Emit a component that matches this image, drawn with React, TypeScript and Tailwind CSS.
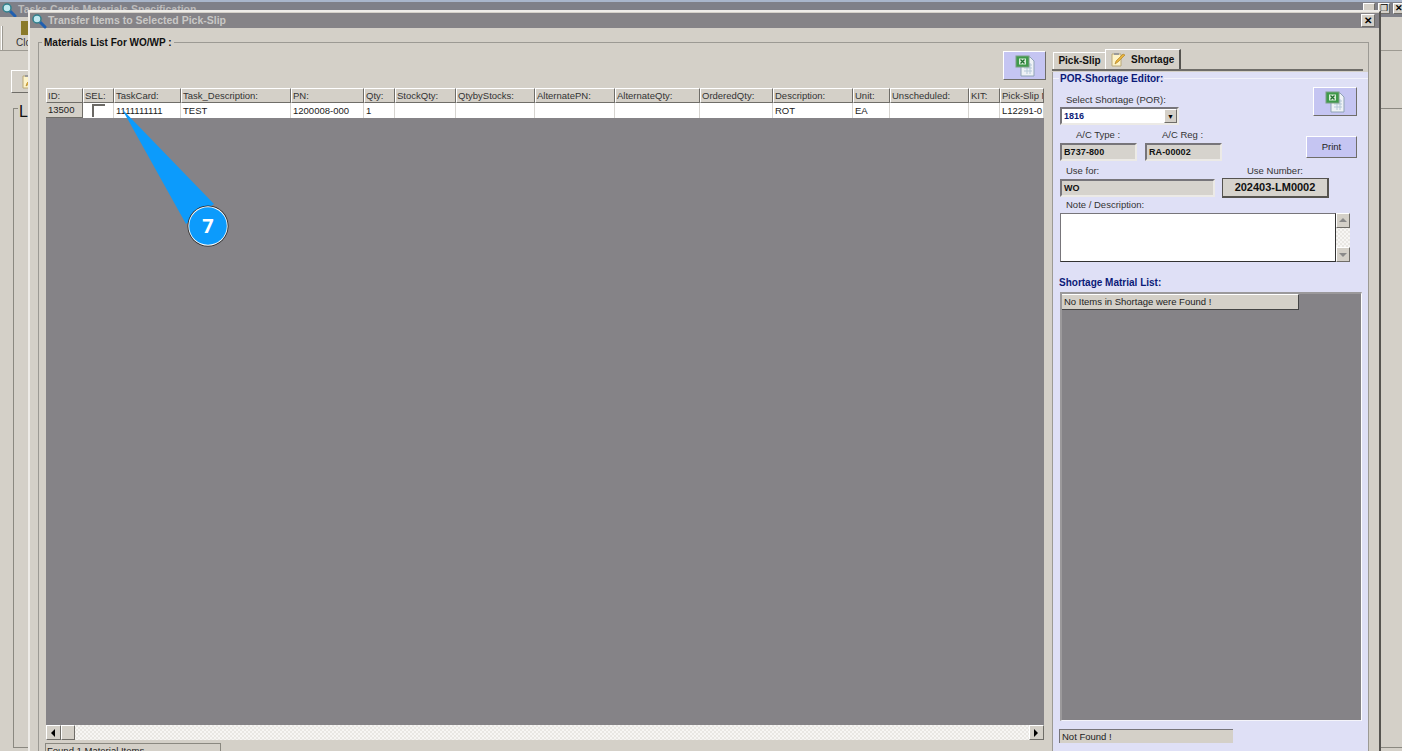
import React from "react";

const raised = "border border-t-white border-l-white border-r-[#6f6d68] border-b-[#6f6d68]";
const sunken = "border-2 border-t-[#77757a] border-l-[#77757a] border-r-[#eceae6] border-b-[#eceae6]";

const cols: [string, string, number][] = [
  ["ID:", "13500", 37],
  ["SEL:", "", 31],
  ["TaskCard:", "1111111111", 67],
  ["Task_Description:", "TEST", 110],
  ["PN:", "1200008-000", 73],
  ["Qty:", "1", 31],
  ["StockQty:", "", 61],
  ["QtybyStocks:", "", 79],
  ["AlternatePN:", "", 80],
  ["AlternateQty:", "", 85],
  ["OrderedQty:", "", 73],
  ["Description:", "ROT", 80],
  ["Unit:", "EA", 37],
  ["Unscheduled:", "", 79],
  ["KIT:", "", 31],
  ["Pick-Slip No:", "L12291-0", 44],
];

function ExcelIcon() {
  return (
    <svg width="24" height="24" viewBox="0 0 24 24">
      <path d="M8 3h9l4 4v15H8z" fill="#eef2f6" stroke="#8fa3b5" />
      <path d="M11 11h8M11 14h8M11 17h8M14 9v11M17 9v11" stroke="#b5c8d8" strokeWidth="1" />
      <rect x="3" y="2" width="13" height="11" fill="#3f9a4a" stroke="#7d9f85" />
      <rect x="6" y="4.5" width="7" height="6" fill="#d8ecd8" />
      <path d="M7.5 5.5l4 4M11.5 5.5l-4 4" stroke="#1f6e2c" strokeWidth="1.3" />
    </svg>
  );
}

function NoteIcon() {
  return (
    <svg width="16" height="16" viewBox="0 0 16 16">
      <path d="M2 2h9v12H2z" fill="#fdf3c8" stroke="#b9a878" />
      <rect x="4" y="1" width="5" height="2" fill="#9a9a9a" />
      <path d="M5 12l1-3 7-7 2 1-7 7z" fill="#e8b33c" stroke="#a87a20" strokeWidth=".6" />
    </svg>
  );
}

function Magnifier() {
  return (
    <svg width="16" height="16" viewBox="0 0 16 16">
      <path d="M8 8l6 6" stroke="#1f5fb0" strokeWidth="3" strokeLinecap="round" />
      <circle cx="6" cy="6" r="4" fill="#bfe8ef" stroke="#2f7f8c" strokeWidth="1.5" />
    </svg>
  );
}

function Arrow({ dir }: { dir: "l" | "r" | "u" | "d" }) {
  const p = { l: "M5 1v8L1 5z", r: "M1 1v8l4-4z", u: "M1 6h8L5 2z", d: "M1 3h8L5 7z" }[dir];
  return (
    <svg width="10" height="10" viewBox="0 0 10 10" className={dir === "l" || dir === "r" ? "ml-[3px]" : ""}>
      <path d={p} fill={dir === "u" || dir === "d" ? "#8a8a8a" : "#000"} />
    </svg>
  );
}

const hatch = "bg-[repeating-conic-gradient(#e9e7e3_0%_25%,#f7f6f4_0%_50%)] bg-[length:4px_4px]";

function Field({ w, children }: { w: string; children: React.ReactNode }) {
  return (
    <div className={`${w} h-[18px] ${sunken} bg-[#d6d3cd] flex items-center pl-[2px] font-bold text-[9px] text-[#111] tracking-[0.1px]`}>
      {children}
    </div>
  );
}

export default function App() {
  return (
    <div
      className="relative w-[1402px] h-[751px] overflow-hidden bg-[#d4d0c8] text-[9.5px] leading-none text-[#222]"
      style={{ fontFamily: '"Liberation Sans", Arial, sans-serif' }}
    >
      {/* Window behind */}
      <div className="h-full flex flex-col">
        <div className="h-[17px] bg-[#7f8088] border-t-2 border-[#a9b6cb] flex items-start justify-between shrink-0">
          <div className="flex items-start pl-[1px] text-[#bdbcbc] font-bold text-[10.5px]">
            <Magnifier />
            <span className="ml-[1px] mt-[2px] whitespace-nowrap">Tasks Cards Materials Specification</span>
          </div>
          <div className="flex gap-[3px] -mr-[3px] mt-px">
            <div className={`w-[12px] h-[11px] bg-[#d4d0c8] ${raised}`} />
            <div className={`w-[12px] h-[11px] bg-[#d4d0c8] ${raised} flex items-center justify-center text-[9px] text-black`}>❐</div>
            <div className={`w-[12px] h-[11px] bg-[#d4d0c8] ${raised} flex items-center justify-center text-[9px] font-bold text-black`}>✕</div>
          </div>
        </div>
        <div className="h-[34px] border-b border-[#9d9a92] flex items-start shrink-0 bg-[#d4d0c8]">
          <div className="w-[2px] h-[24px] mt-[9px] ml-[1px] border-l border-r border-l-white border-r-[#9d9a92]" />
          <div className="flex flex-col items-start ml-[13px] pt-[4px]">
            <div className="w-[10px] h-[14px] ml-[5px] bg-[#8a7a2a]" />
            <span className="text-[10px] mt-[3px] text-[#333]">Clo</span>
          </div>
        </div>
        <div className="pl-[11px] pt-[19px] shrink-0">
          <div className={`w-[40px] h-[23px] bg-[#d4d0c8] ${raised} flex items-center pl-[9px]`}>
            <NoteIcon />
          </div>
        </div>
        <div className="mt-[15px] ml-[13px] flex-1 border-t border-l border-b border-[#8a8880] mb-[3px] relative">
          <span className="absolute left-[4px] -top-[5px] bg-[#d4d0c8] px-px text-[16px] text-[#111]">L</span>
        </div>
      </div>

      {/* Modal window */}
      <div className="absolute left-[28px] top-[10px] w-[1353px] h-[741px] bg-[#d4d0c8] border-t-2 border-l-2 border-[#eeece8] border-r-2 border-r-[#55534f] flex flex-col">
        <div className="h-[15px] mt-px bg-[#858387] flex items-center justify-between pl-[1px] pr-[4px] shrink-0">
          <div className="flex items-center text-[#c9c8c6] font-bold text-[10.5px]">
            <Magnifier />
            <span className="ml-px">Transfer Items to Selected Pick-Slip</span>
          </div>
          <div className={`w-[14px] h-[13px] bg-[#d4d0c8] ${raised} flex items-center justify-center text-black text-[10px] font-bold`}>✕</div>
        </div>

        {/* Group box */}
        <div className="relative mt-[14px] ml-[8px] mr-[10px] flex-1 border-t border-l border-r border-[#9c9a94] flex pl-[7px]">
          <span className="absolute left-[3px] -top-[5px] bg-[#d4d0c8] px-[2px] font-bold text-[10px] text-[#111]">Materials List For WO/WP :</span>

          {/* Left column */}
          <div className="w-[998px] flex flex-col shrink-0">
            <div className="h-[45px] flex justify-end items-start pt-[8px] shrink-0">
              <div className={`w-[43px] h-[29px] -mr-[2px] bg-[#c5c5f2] ${raised} flex items-center justify-center`}>
                <ExcelIcon />
              </div>
            </div>
            <div className="flex shrink-0 h-[15px]">
              {cols.map(([h, , w]) => (
                <div key={h} style={{ width: w }} className={`shrink-0 h-[15px] bg-[#d4d0c8] ${raised} pl-[1px] flex items-center whitespace-nowrap overflow-hidden text-[#333]`}>
                  {h}
                </div>
              ))}
            </div>
            <div className="flex shrink-0 h-[15px] bg-white">
              {cols.map(([h, v, w], i) => (
                <div key={h} style={{ width: w }} className={`shrink-0 h-[15px] ${i === 0 ? "bg-[#d4d0c8] border-r border-b border-[#6f6d68]" : "border-r border-[#d6d4d0]"} pl-[2px] flex items-center whitespace-nowrap overflow-hidden text-[#222]`}>
                  {h === "SEL:" ? <div className="w-[13px] h-[13px] ml-[7px] border-t-2 border-l-2 border-[#6b6965] bg-white" /> : v}
                </div>
              ))}
            </div>
            <div className="h-[607px] bg-[#858387] shrink-0" />
            <div className={`h-[15px] shrink-0 flex justify-between ${hatch}`}>
              <div className="flex">
                <div className={`w-[15px] h-[15px] bg-[#d4d0c8] ${raised} flex items-center`}><Arrow dir="l" /></div>
                <div className={`w-[14px] h-[15px] bg-[#d4d0c8] ${raised}`} />
              </div>
              <div className={`w-[15px] h-[15px] bg-[#d4d0c8] ${raised} flex items-center`}><Arrow dir="r" /></div>
            </div>
            <div className="mt-[3px] -ml-[1px] w-[176px] flex-1 bg-[#d4d0c8] border-t border-l border-r border-[#8a8880] pl-[1px] pt-[2px] text-[#222] whitespace-nowrap">Found 1 Material Items</div>
          </div>

          {/* Right column */}
          <div className="ml-[8px] flex-1 flex flex-col">
            <div className="h-[22px] mt-[6px] mr-[5px] flex items-end border-b-2 border-[#6f6d68] shrink-0">
              <div className="h-[17px] w-[52px] ml-[1px] bg-[#d4d0c8] border-t border-l border-white flex items-center justify-center font-bold text-[10px] text-[#111]">Pick-Slip</div>
              <div className="h-[20px] w-[76px] bg-[#d4d0c8] border-t border-l border-white border-r-2 border-r-[#55534f] flex items-center pl-[4px] gap-[5px] font-bold text-[10px] text-[#111]">
                <NoteIcon />
                <span>Shortage</span>
              </div>
            </div>
            <div className="flex-1 bg-[#dfe0f6] border-l border-[#9c9a94] mt-px pl-[7px] relative flex flex-col">
              <div className="absolute left-0 right-0 top-[6px] border-t border-[#f2f2fb]" />
              <span className="relative self-start mt-px bg-[#dfe0f6] px-px -ml-px font-bold text-[10px] text-[#0b1a78] leading-[11px]">POR-Shortage Editor:</span>

              <div className="flex justify-between items-start pr-[11px] mt-[3px]">
                <div className="pt-[8px]">
                  <div className="pl-[6px] h-[10px] text-[#333]">Select Shortage (POR):</div>
                  <div className={`mt-[2px] w-[119px] h-[18px] bg-white ${sunken} flex items-center justify-between pl-[2px] font-bold text-[9px] text-[#0b1a78]`}>
                    1816
                    <div className={`w-[13px] h-[14px] bg-[#d4d0c8] ${raised} flex items-center justify-center text-[7px] text-black`}>▼</div>
                  </div>
                </div>
                <div className={`w-[44px] h-[29px] bg-[#c5c5f2] ${raised} flex items-center justify-center`}>
                  <ExcelIcon />
                </div>
              </div>

              <div className="flex justify-between items-start pr-[11px] mt-[4px]">
                <div>
                  <div className="flex h-[10px] mt-[1px] text-[#333]">
                    <span className="pl-[16px] w-[102px]">A/C Type :</span>
                    <span>A/C Reg :</span>
                  </div>
                  <div className="flex gap-[8px] mt-[3px]">
                    <Field w="w-[77px]">B737-800</Field>
                    <Field w="w-[77px]">RA-00002</Field>
                  </div>
                </div>
                <div className={`w-[51px] h-[22px] mt-[7px] bg-[#c5c5f2] ${raised} flex items-center justify-center text-[#222]`}>Print</div>
              </div>

              <div className="flex gap-[7px] mt-[4px]">
                <div>
                  <div className="pl-[6px] h-[10px] mt-px text-[#333]">Use for:</div>
                  <div className="mt-[3px]"><Field w="w-[155px]">WO</Field></div>
                </div>
                <div>
                  <div className="h-[10px] mt-px pl-[25px] text-[#333]">Use Number:</div>
                  <div className="mt-[2px] w-[107px] h-[20px] bg-[#d6d3cd] border border-[#55534f] border-r-2 border-b-2 flex items-center justify-center font-bold text-[11px] text-[#111]">202403-LM0002</div>
                </div>
              </div>

              <div className="pl-[6px] h-[10px] mt-[2px] text-[#333]">Note / Description:</div>
              <div className="flex mt-[3px] h-[49px] shrink-0">
                <div className="w-[276px] bg-white border border-[#333] border-t-[#77757a] border-l-[#77757a]" />
                <div className={`w-[14px] flex flex-col justify-between ${hatch}`}>
                  <div className={`h-[15px] bg-[#d4d0c8] ${raised} flex items-center justify-center`}><Arrow dir="u" /></div>
                  <div className={`h-[15px] bg-[#d4d0c8] ${raised} flex items-center justify-center`}><Arrow dir="d" /></div>
                </div>
              </div>

              <div className="-ml-[1px] mt-[16px] h-[10px] font-bold text-[10px] text-[#0b1a78]">Shortage Matrial List:</div>
              <div className="mt-[4px] w-[302px] h-[429px] bg-[#858387] border border-t-2 border-l-2 border-[#9b999b] border-r-white border-b-[#f4f4fa] shrink-0">
                <div className="w-[237px] h-[16px] bg-[#d4d0c8] border-r border-b border-t border-t-white border-[#444] flex items-center pl-[2px] text-[#222]">No Items in Shortage were Found !</div>
              </div>
              <div className="mt-[8px] -ml-[1px] w-[174px] h-[14px] bg-[#d4d0c8] border-t border-l border-[#77757a] flex items-center pl-[2px] text-[#222]">Not Found !</div>
            </div>
          </div>
        </div>
      </div>

      {/* Callout */}
      <svg className="absolute left-0 top-0 pointer-events-none" width="1402" height="751" viewBox="0 0 1402 751">
        <path d="M122 109L214 204L186 224Z" fill="#0c9bfc" />
        <circle cx="208" cy="226" r="20.5" fill="#222" />
        <circle cx="208" cy="226" r="19.7" fill="#fff" />
        <circle cx="208" cy="226" r="18.8" fill="#0c9bfc" />
      </svg>
      <span className="absolute left-[198px] top-[215px] w-[20px] text-center text-[20px] leading-[22px] font-bold text-white" style={{ fontFamily: '"Open Sans", sans-serif' }}>7</span>
    </div>
  );
}
